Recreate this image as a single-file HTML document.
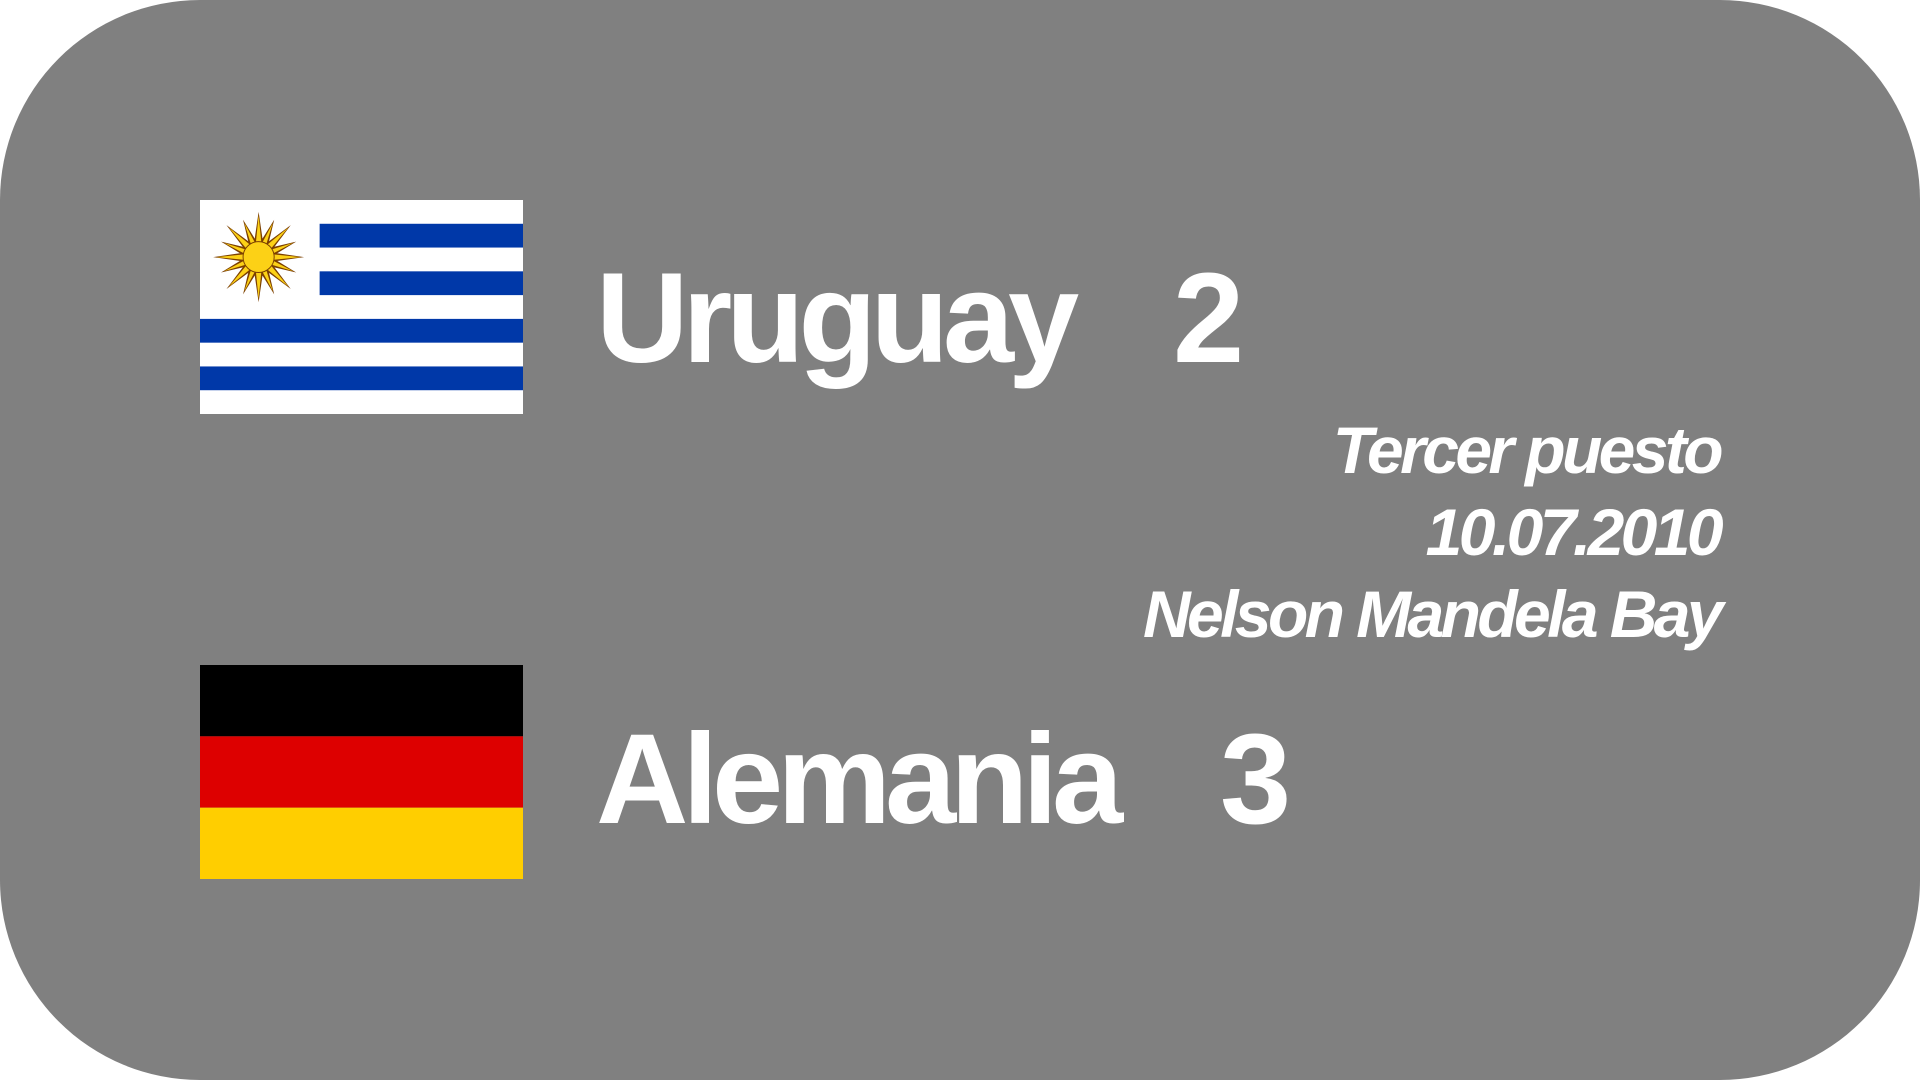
<!DOCTYPE html>
<html><head><meta charset="utf-8"><style>
html,body{margin:0;padding:0;width:1920px;height:1080px;background:#fff;overflow:hidden}
.card{position:absolute;left:0;top:0;width:1920px;height:1080px;background:#808080;border-radius:200px}
.t{position:absolute;font-family:"Liberation Sans",sans-serif;font-weight:bold;color:#fff;white-space:nowrap;line-height:1}
.big{font-size:128px;letter-spacing:-6px}
.it{font-style:italic;font-size:66px;letter-spacing:-3.6px;right:200px;text-align:right}
</style></head><body>
<div class="card"></div>
<svg style="position:absolute;left:200px;top:200px" width="323" height="214" viewBox="0 0 27 18" preserveAspectRatio="none">
<rect width="27" height="18" fill="#fff"/>
<g fill="#0038a8"><rect x="10" y="2" width="17" height="2"/><rect x="10" y="6" width="17" height="2"/><rect y="10" width="27" height="2"/><rect y="14" width="27" height="2"/></g>
<g transform="translate(4.9,4.8)">
<g fill="#7b3f00">
<polygon points="0,-3.8 0.55,0 -0.55,0" transform="rotate(0)"/><polygon points="0,-3.8 0.55,0 -0.55,0" transform="rotate(45)"/><polygon points="0,-3.8 0.55,0 -0.55,0" transform="rotate(90)"/><polygon points="0,-3.8 0.55,0 -0.55,0" transform="rotate(135)"/><polygon points="0,-3.8 0.55,0 -0.55,0" transform="rotate(180)"/><polygon points="0,-3.8 0.55,0 -0.55,0" transform="rotate(225)"/><polygon points="0,-3.8 0.55,0 -0.55,0" transform="rotate(270)"/><polygon points="0,-3.8 0.55,0 -0.55,0" transform="rotate(315)"/>
<polygon points="0,-3.4 0.55,0 -0.55,0" transform="rotate(22.5)"/><polygon points="0,-3.4 0.55,0 -0.55,0" transform="rotate(67.5)"/><polygon points="0,-3.4 0.55,0 -0.55,0" transform="rotate(112.5)"/><polygon points="0,-3.4 0.55,0 -0.55,0" transform="rotate(157.5)"/><polygon points="0,-3.4 0.55,0 -0.55,0" transform="rotate(202.5)"/><polygon points="0,-3.4 0.55,0 -0.55,0" transform="rotate(247.5)"/><polygon points="0,-3.4 0.55,0 -0.55,0" transform="rotate(292.5)"/><polygon points="0,-3.4 0.55,0 -0.55,0" transform="rotate(337.5)"/>
</g>
<g fill="#fcd116">
<polygon points="0,-3.5 0.35,0 -0.35,0" transform="rotate(0)"/><polygon points="0,-3.5 0.35,0 -0.35,0" transform="rotate(45)"/><polygon points="0,-3.5 0.35,0 -0.35,0" transform="rotate(90)"/><polygon points="0,-3.5 0.35,0 -0.35,0" transform="rotate(135)"/><polygon points="0,-3.5 0.35,0 -0.35,0" transform="rotate(180)"/><polygon points="0,-3.5 0.35,0 -0.35,0" transform="rotate(225)"/><polygon points="0,-3.5 0.35,0 -0.35,0" transform="rotate(270)"/><polygon points="0,-3.5 0.35,0 -0.35,0" transform="rotate(315)"/>
<polygon points="0,-3.1 0.3,0 -0.3,0" transform="rotate(22.5)"/><polygon points="0,-3.1 0.3,0 -0.3,0" transform="rotate(67.5)"/><polygon points="0,-3.1 0.3,0 -0.3,0" transform="rotate(112.5)"/><polygon points="0,-3.1 0.3,0 -0.3,0" transform="rotate(157.5)"/><polygon points="0,-3.1 0.3,0 -0.3,0" transform="rotate(202.5)"/><polygon points="0,-3.1 0.3,0 -0.3,0" transform="rotate(247.5)"/><polygon points="0,-3.1 0.3,0 -0.3,0" transform="rotate(292.5)"/><polygon points="0,-3.1 0.3,0 -0.3,0" transform="rotate(337.5)"/>
</g>
<circle r="1.3" fill="#fcd116" stroke="#7b3f00" stroke-width="0.08"/>
</g>
</svg>
<svg style="position:absolute;left:200px;top:665px" width="323" height="214" viewBox="0 0 5 3" preserveAspectRatio="none">
<rect width="5" height="1" fill="#000"/><rect y="1" width="5" height="1" fill="#dd0000"/><rect y="2" width="5" height="1" fill="#ffce00"/>
</svg>
<div class="t big" style="left:596px;top:255px">Uruguay</div>
<div class="t big" style="left:1173px;top:255px">2</div>
<div class="t big" style="left:596px;top:716px">Alemania</div>
<div class="t big" style="left:1220px;top:716px">3</div>
<div class="t it" style="top:417px">Tercer puesto</div>
<div class="t it" style="top:499px">10.07.2010</div>
<div class="t it" style="top:581px">Nelson Mandela Bay</div>
</body></html>
